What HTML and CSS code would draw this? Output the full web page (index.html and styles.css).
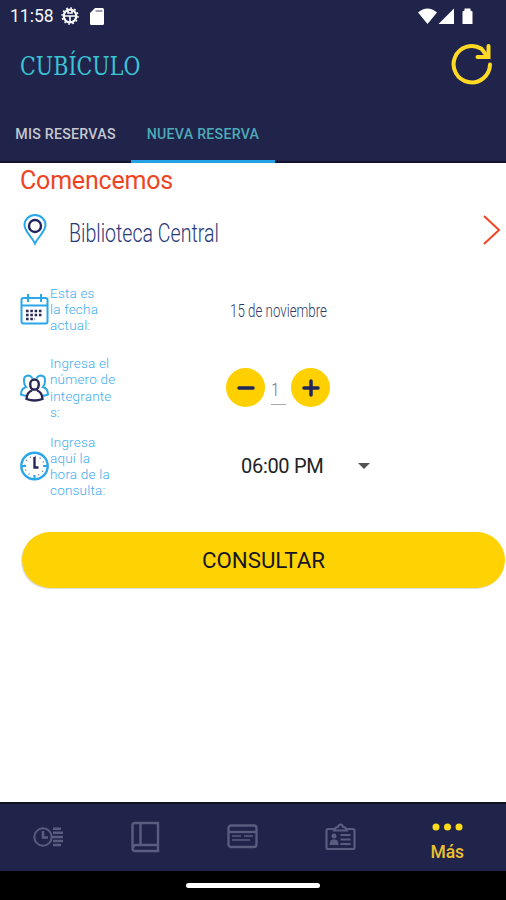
FILE: index.html
```html
<!DOCTYPE html>
<html lang="es">
<head>
<meta charset="utf-8">
<title>Cubículo</title>
<link rel="stylesheet" href="styles.css">
</head>
<body>
<div class="app">
  <header class="top">
    <div class="status">
      <span class="time">11:58</span>
      <svg class="gear" width="18" height="18" viewBox="0 0 18 18" fill="none" stroke="#fff"><circle cx="9" cy="9" r="6.300" stroke-width="2.200"/><circle cx="9" cy="9" r="8" stroke-width="1.400" stroke-dasharray="1.800 2.388"/><path d="M3 9h12M9 9v6M7 3.500v2.500h4V3.500" stroke-width="1.600"/></svg>
      <svg class="sd" width="14" height="17" viewBox="0 0 14 17"><path d="M5 0h7.500q1.500 0 1.500 1.500v14q0 1.500-1.500 1.500h-11Q0 17 0 15.500V5z" fill="#fff"/><path d="M5.500 3h7" stroke="#a0a1b0" stroke-width="2"/></svg>
      <svg class="signals" width="56" height="17" viewBox="0 0 56 17" fill="#fff"><path d="M0 4.500Q9.500-3.500 19 4.500L9.500 16z"/><path d="M20.500 16L36 .5V16z"/><path d="M44.500 3.500l2-1V.5h6v2l2 1V16H44.500z"/></svg>
    </div>
    <div class="title-row">
      <h1 class="title"><span>CUBÍCULO</span></h1>
      <svg class="refresh" width="42" height="42" viewBox="0 0 42 42" fill="none" stroke="#ffda24" stroke-width="4" stroke-linecap="round" stroke-linejoin="round"><path d="M39 21.500A18.200 18.200 0 1 1 30.500 5.800L36 13"/><path d="M37.500 3v11H26.500" stroke-linejoin="miter"/></svg>
    </div>
    <nav class="tabs"><span class="tab first">MIS RESERVAS</span><span class="tab active">NUEVA RESERVA</span></nav>
  </header>
  <main>
    <h2 class="begin">Comencemos</h2>
    <div class="place">
      <svg width="24" height="32" viewBox="0 0 24 32" fill="none"><path d="M12 29.500C9 23 1.500 17.500 1.500 11A10.500 10 0 0 1 22.500 11C22.500 17.500 15 23 12 29.500z" stroke="#26a7ec" stroke-width="2"/><circle cx="12" cy="12" r="6" stroke="#20245a" stroke-width="2.400"/></svg>
      <span class="place-name">Biblioteca Central</span>
      <svg class="arrow" width="18" height="32" viewBox="0 0 18 32" fill="none" stroke="#f04424" stroke-width="2"><path d="M1 2l15 14L1 30"/></svg>
    </div>
    <section class="row date">
      <svg width="29" height="32" viewBox="0 0 29 32" fill="none"><rect x="1.500" y="5" width="26" height="25.500" rx="2" stroke="#2ba6e9" stroke-width="2"/><path d="M2 12.500h25M8 1v8M21 1v8" stroke="#2ba6e9" stroke-width="2"/><path d="M6 18h17M6 22h17M6 26h9" stroke="#292957" stroke-width="2.600" stroke-dasharray="2.600 1.700"/></svg>
      <p class="label">Esta es<br>la fecha<br>actual:</p>
      <span class="date-value">15 de noviembre</span>
    </section>
    <section class="row people">
      <svg width="29" height="30" viewBox="0 0 29 30" fill="none" stroke-width="2"><g stroke="#2ba6e9"><path d="M12.500 5.500Q11 2.500 8 2.500 3.500 3 4 8q0 4 2 6Q1 15.500 1 21.500q2 1 5 1.200M16.500 5.500Q18 2.500 21 2.500q4.500.5 4 5.500 0 4-2 6 5 1.500 5 7.500-2 1-5 1.200"/></g><g stroke="#262650" stroke-width="2.300"><path d="M10.200 11a4.300 4.500 0 0 1 8.600 0q0 4-2.300 5.500h-4Q10.200 15 10.200 11z"/><path d="M12 17.500q-5 1.500-5.500 8.500 8 3 16 0-.5-7-5.500-8.500"/></g></svg>
      <p class="label">Ingresa el<br>número de<br>integrante<br>s:</p>
      <div class="stepper">
        <button><svg width="18" height="18" viewBox="0 0 18 18"><path d="M2 9h14" stroke="#20265c" stroke-width="3.500" stroke-linecap="round"/></svg></button>
        <span class="count"><span>1</span></span>
        <button><svg width="18" height="18" viewBox="0 0 18 18"><path d="M2 9h14M9 2v14" stroke="#20265c" stroke-width="3.500" stroke-linecap="round"/></svg></button>
      </div>
    </section>
    <section class="row hour">
      <svg width="29" height="30" viewBox="0 0 29 30" fill="none"><circle cx="14.500" cy="15" r="13.200" stroke="#2ba6e9" stroke-width="2.400"/><circle cx="14.500" cy="15" r="9.700" stroke="#6b7094" stroke-width="1.200" stroke-dasharray="1.200 3.879"/><path d="M2 15h4M23 15h4M14.500 24v4" stroke="#2ba6e9" stroke-width="2"/><path d="M14.500 6v10.500h4" stroke="#28245c" stroke-width="2.400"/></svg>
      <p class="label">Ingresa<br>aquí la<br>hora de la<br>consulta:</p>
      <span class="hour-value">06:00 PM</span>
      <svg class="caret" width="12" height="6" viewBox="0 0 12 6"><path d="M0 0h12L6 6z" fill="#555"/></svg>
    </section>
    <button class="submit">CONSULTAR</button>
  </main>
  <footer>
    <nav class="bottom">
      <div class="item"><svg width="31" height="22" viewBox="0 0 31 22" fill="none" stroke="#5a5c80" stroke-width="2"><circle cx="10" cy="11" r="8.700"/><path d="M10 5v6.500h5M20 2.800h8M20 6.800h10M18 11h12M20 15h10M20 19h8" stroke-width="2.500"/></svg></div>
      <div class="item"><svg width="29" height="32" viewBox="0 0 29 32" fill="none" stroke="#5a5c80" stroke-width="2.400"><path d="M4 2h23v28H4q-2.500 0-2.500-2.500V4Q1.500 2 4 2zM9.500 2v22M2 27.500Q2 24 5 24h22"/></svg></div>
      <div class="item"><svg width="31" height="25" viewBox="0 0 31 25" fill="none" stroke="#5a5c80" stroke-width="2.300"><rect x="1.500" y="1.500" width="28" height="21.500" rx="2.500"/><path d="M2 8h27"/><path d="M5 12h9M17 12h9M5 16h18" stroke-width="1.700"/></svg></div>
      <div class="item"><svg width="31" height="28" viewBox="0 0 31 28" fill="none" stroke="#5a5c80" stroke-width="2.200"><path d="M9 6H3Q1.500 6 1.500 7.500v17q0 1.500 1.500 1.500h25q1.500 0 1.500-1.500v-17Q29.500 6 28 6h-6M9 7.500h13Q21 4 18 4q-.5-2.500-2.500-2.500T13 4Q10 4 9 7.500z"/><path d="M15.500 12h10M15.500 16.500h10M15.500 21h10"/><circle cx="9" cy="13" r="2.500" fill="#5a5c80" stroke="none"/><path d="M4.500 22q0-5 3-5.500h3q3 .5 3 5.500z" fill="#5a5c80" stroke="none"/></svg></div>
      <div class="item more"><svg width="31" height="8" viewBox="0 0 31 8" fill="#ffdb1d"><circle cx="4" cy="4" r="3.500"/><circle cx="15.500" cy="4" r="3.500"/><circle cx="27" cy="4" r="3.500"/></svg><span>Más</span></div>
    </nav>
    <div class="gesture"><div class="pill"></div></div>
  </footer>
</div>
</body>
</html>
```
FILE: styles.css
```css
* { box-sizing: border-box; }
body { margin: 0; font-family: Roboto, "Liberation Sans", sans-serif; background: #fff; }
svg { display: block; flex: none; }
h1, h2, p { margin: 0; font-weight: 400; }
button { border: 0; padding: 0; font-family: inherit; }
.app { width: 506px; height: 900px; display: flex; flex-direction: column; overflow: hidden; }
.top { height: 163px; background: #20234a; border-bottom: 2px solid #10122e; display: flex; flex-direction: column; flex: none; }
.status { height: 32px; display: flex; align-items: center; padding: 0 32px 0 10px; }
.time { color: #f5f5f8; font-size: 17.500px; width: 44px; letter-spacing: 0; white-space: nowrap; }
.gear { margin-left: 7px; }
.sd { margin-left: 11px; }
.signals { margin-left: auto; }
.title-row { height: 64px; display: flex; align-items: center; justify-content: space-between; padding: 0 13px 0 20px; }
.title { width: 121px; padding-top: 3px; font: 400 25.500px/30px "DejaVu Serif", serif; color: #3bc3d3; white-space: nowrap; }
.title span { display: inline-block; transform: scaleX(.81); transform-origin: left; }
.tabs { height: 67px; display: flex; margin-top: auto; margin-bottom: -2px; }
.tab { display: flex; align-items: center; justify-content: center; padding-top: 11px; font-size: 14.200px; font-weight: 500; letter-spacing: .25px; border-bottom: 3px solid transparent; white-space: nowrap; }
.tab.first { width: 131px; color: #c6c8cf; }
.tab.active { width: 144px; color: #4cabb9; border-color: #23a2e6; }
main { flex: 1; display: flex; flex-direction: column; }
.begin { font-size: 25px; line-height: 34px; letter-spacing: -.2px; padding-left: 20px; padding-top: 1px; height: 34px; color: #ee4424; }
.place { height: 66px; display: flex; align-items: center; padding: 0 5px 0 23px; }
.place-name { margin-left: 22px; padding-top: 5px; font-size: 26px; font-weight: 300; color: #28397a; transform: scaleX(.753); transform-origin: left; white-space: nowrap; }
.arrow { margin-left: auto; }
.row { display: flex; align-items: center; padding-left: 20px; }
.row.date { height: 92px; }
.row.people { height: 65px; }
.row.hour { height: 92px; }
.label { width: 80px; margin-left: 1px; font-size: 13.500px; font-weight: 300; line-height: 16.200px; letter-spacing: .2px; color: #42adf0; white-space: nowrap; }
.date-value { margin-left: 100px; padding-top: 3px; font-size: 18.500px; font-weight: 300; color: #303968; transform: scaleX(.72); transform-origin: left; white-space: nowrap; }
.stepper { display: flex; align-items: center; margin-left: 96px; }
.stepper button { width: 39px; height: 39px; border-radius: 50%; background: #ffd000; display: flex; align-items: center; justify-content: center; }
.count { width: 15px; height: 34px; margin: 0 5px 0 6px; border-bottom: 1px solid #aaa; text-align: center; font-size: 19px; line-height: 38px; font-weight: 300; color: #64688c; }
.count span { display: inline-block; transform: scaleX(.75); margin-left: -6px; }
.hour-value { width: 117px; margin-left: 111px; font-size: 20px; color: #222; letter-spacing: -.3px; white-space: nowrap; }
.submit { margin: 20px 0 0 22px; width: 483px; height: 56px; border-radius: 28px; background: #ffd203; color: #171723; font-size: 22.300px; flex: none; box-shadow: -1px 1px 1px #ddd; }
footer { height: 98px; flex: none; }
.bottom { height: 69px; background: #20234a; border-top: 2px solid #11131f; display: flex; padding-bottom: 2px; }
.item { width: 97.200px; display: flex; align-items: center; justify-content: center; }
.more { width: 117px; flex-direction: column; gap: 11px; padding-top: 12px; color: #ecc22c; font-size: 17.500px; line-height: 21px; font-weight: 500; }
.gesture { height: 29px; background: #000; display: flex; justify-content: center; padding-top: 12px; }
.pill { width: 134px; height: 5px; border-radius: 3px; background: #fff; }
```
